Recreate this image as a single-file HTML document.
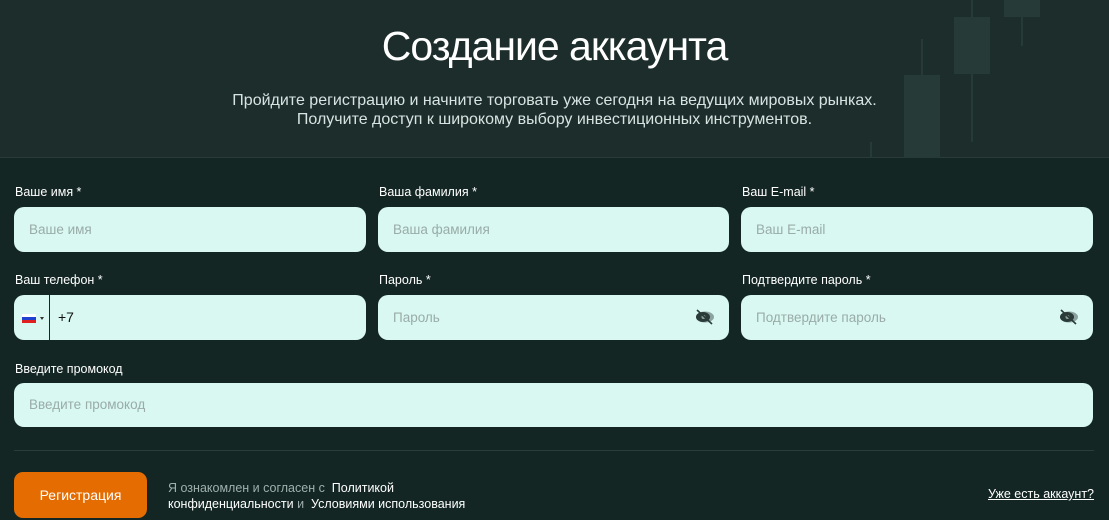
<!DOCTYPE html>
<html><head><meta charset="utf-8"><style>
*{box-sizing:border-box;margin:0;padding:0}
body{width:1109px;height:520px;overflow:hidden;background:#132624;font-family:"Liberation Sans","DejaVu Sans",sans-serif;position:relative;color:#fff}
.hdr{position:absolute;left:0;top:0;width:1109px;height:158px;background:#1c2d2b;border-bottom:1px solid #2a3b39}
.c{position:absolute;background:#263a37}
h1{position:absolute;top:23px;left:0;width:1109px;text-align:center;font-weight:normal;font-size:41px;color:#fff;letter-spacing:-1px}
.sub{position:absolute;top:91px;left:0;width:1109px;text-align:center;font-size:16px;line-height:19px;color:#d8e4e2}
.lbl{position:absolute;font-size:12.5px;color:#fff}
.in{position:absolute;height:45px;background:#d8f8f1;border-radius:10px;font-size:13.5px;color:#9aaba8;padding-left:15px;line-height:45px}
.eye{position:absolute;right:14px;top:14px}
.hr{position:absolute;left:14px;top:450px;width:1080px;height:1px;background:#2a3d3a}
.btn{position:absolute;left:14px;top:472px;width:133px;height:46px;background:#e56c00;border-radius:9px;color:#fff;font-size:14px;text-align:center;line-height:46px}
.terms{position:absolute;left:168px;top:480px;font-size:12.5px;line-height:16px;color:#9fb0ad}
.terms b{color:#fff;font-weight:normal}
.login{position:absolute;right:15px;top:487px;font-size:12.5px;color:#fff;text-decoration:underline}
</style></head><body>
<div class="hdr">
<div class="c" style="left:904px;top:75px;width:36px;height:83px"></div>
<div class="c" style="left:921px;top:39px;width:2px;height:36px"></div>
<div class="c" style="left:954px;top:17px;width:36px;height:57px"></div>
<div class="c" style="left:971px;top:0;width:2px;height:142px"></div>
<div class="c" style="left:1004px;top:0;width:36px;height:17px"></div>
<div class="c" style="left:1021px;top:17px;width:2px;height:29px"></div>
<div class="c" style="left:870px;top:142px;width:2px;height:16px"></div>
<h1>Создание аккаунта</h1>
<div class="sub">Пройдите регистрацию и начните торговать уже сегодня на ведущих мировых рынках.<br>Получите доступ к широкому выбору инвестиционных инструментов.</div>
</div>
<div class="lbl" style="left:15px;top:185px">Ваше имя *</div>
<div class="lbl" style="left:379px;top:185px">Ваша фамилия *</div>
<div class="lbl" style="left:742px;top:185px">Ваш E-mail *</div>
<div class="in" style="left:14px;top:207px;width:352px">Ваше имя</div>
<div class="in" style="left:378px;top:207px;width:351px">Ваша фамилия</div>
<div class="in" style="left:741px;top:207px;width:352px">Ваш E-mail</div>
<div class="lbl" style="left:15px;top:273px">Ваш телефон *</div>
<div class="lbl" style="left:379px;top:273px">Пароль *</div>
<div class="lbl" style="left:742px;top:273px">Подтвердите пароль *</div>
<div class="in" style="left:14px;top:295px;width:352px;padding-left:0;color:#111">
<div style="position:absolute;left:8px;top:19px;width:14px;height:9px;background:linear-gradient(#fff 33%,#2040d0 33%,#2040d0 66%,#e02020 66%)"></div>
<div style="position:absolute;left:26px;top:22px;border:2.5px solid transparent;border-top:3px solid #333"></div>
<div style="position:absolute;left:35px;top:0;width:1px;height:45px;background:#222"></div>
<span style="position:absolute;left:44px;font-size:14px">+7</span></div>
<div class="in" style="left:378px;top:295px;width:351px">Пароль
<svg class="eye" width="20" height="16" viewBox="0 0 20 16"><ellipse cx="10" cy="8" rx="9" ry="5.5" fill="#8aa39e"/><ellipse cx="8" cy="8" rx="7" ry="5" fill="#2a3b38"/><circle cx="8.5" cy="8" r="2" fill="#8aa39e"/><path d="M2 1L17 15" stroke="#2a3b38" stroke-width="1.6"/></svg></div>
<div class="in" style="left:741px;top:295px;width:352px">Подтвердите пароль
<svg class="eye" width="20" height="16" viewBox="0 0 20 16"><ellipse cx="10" cy="8" rx="9" ry="5.5" fill="#8aa39e"/><ellipse cx="8" cy="8" rx="7" ry="5" fill="#2a3b38"/><circle cx="8.5" cy="8" r="2" fill="#8aa39e"/><path d="M2 1L17 15" stroke="#2a3b38" stroke-width="1.6"/></svg></div>
<div class="lbl" style="left:15px;top:362px">Введите промокод</div>
<div class="in" style="left:14px;top:383px;width:1079px;height:44px;line-height:44px">Введите промокод</div>
<div class="hr"></div>
<div class="btn">Регистрация</div>
<div class="terms">Я ознакомлен и согласен с &nbsp;<b>Политикой</b><br><b>конфиденциальности</b> и &nbsp;<b>Условиями использования</b></div>
<div class="login">Уже есть аккаунт?</div>
</body></html>
